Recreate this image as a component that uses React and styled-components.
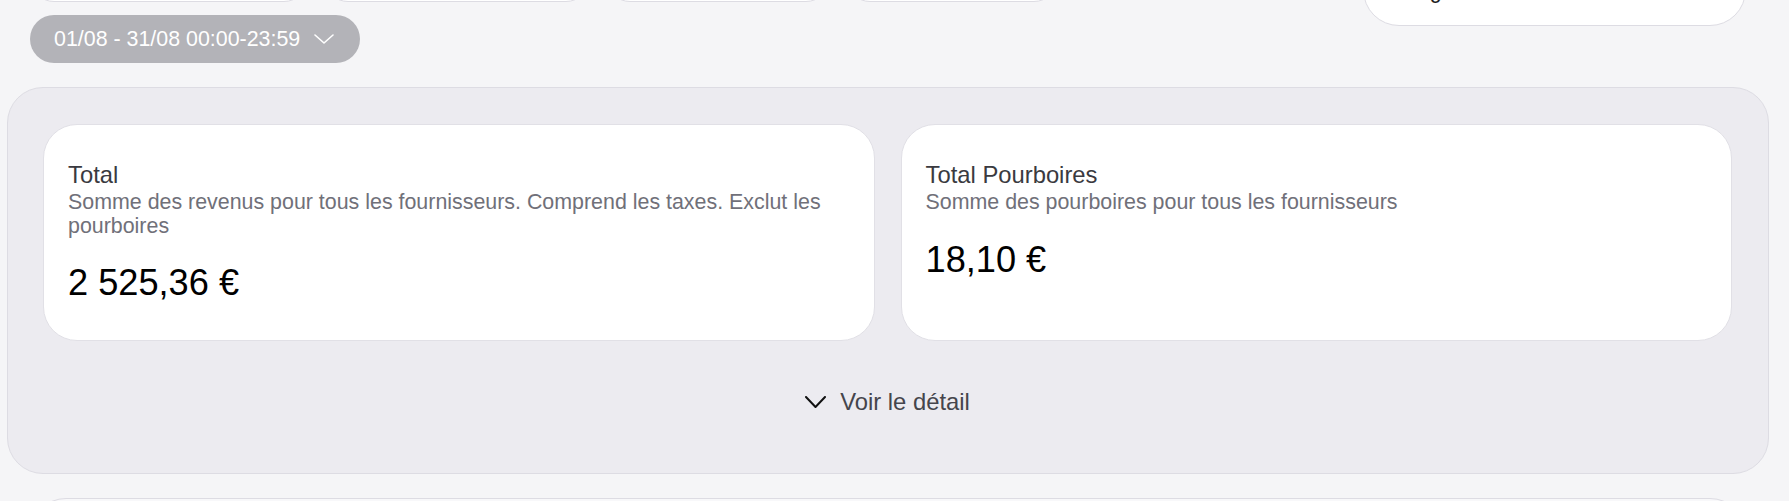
import React from "react";
import styled, { createGlobalStyle } from "styled-components";

const GlobalStyle = createGlobalStyle`
  html, body {
    margin: 0;
    padding: 0;
    background: #f5f5f7;
    overflow: hidden;
    font-family: "Liberation Sans", Arial, sans-serif;
  }
  * { box-sizing: border-box; }
`;

const Page = styled.div`
  padding: 0 43px 0 30px;
  display: flex;
  flex-direction: column;
`;

const Header = styled.div`
  display: flex;
  justify-content: space-between;
  align-items: flex-start;
`;

const LeftColumn = styled.div`
  display: flex;
  flex-direction: column;
  align-items: flex-start;
`;

const FilterRow = styled.div`
  display: flex;
  gap: 16px;
  margin-top: -46px;
`;

const FilterBox = styled.div`
  width: ${(p) => p.$w}px;
  height: 48px;
  background: #ffffff;
  border: 1px solid #dddce3;
  border-radius: 24px;
`;

const DatePill = styled.button`
  margin-top: 13px;
  height: 48px;
  display: flex;
  align-items: center;
  gap: 14px;
  padding: 0 26px 0 24px;
  border: none;
  border-radius: 24px;
  background: #b3b3b8;
  color: #ffffff;
  font-family: "Liberation Sans", Arial, sans-serif;
  font-size: 21.4px;
  cursor: pointer;
`;

const StoreBox = styled.div`
  width: 383px;
  height: 80px;
  margin-top: -54px;
  background: #ffffff;
  border: 1px solid #dddce3;
  border-radius: 36px;
  display: flex;
  align-items: center;
  padding: 0 36px;
  font-size: 21.4px;
  line-height: 25px;
  color: #1c1c22;
  overflow: hidden;
`;

const StoreLabel = styled.span`
  transform: translateY(5px);
`;

const Panel = styled.section`
  margin: 24px -23px 0 -23px;
  background: #ecebf0;
  border: 1px solid #dddce3;
  border-radius: 36px;
  padding: 36px 36px 47.5px 35px;
  display: flex;
  flex-direction: column;
  align-items: stretch;
`;

const CardGrid = styled.div`
  display: grid;
  grid-template-columns: 1fr 1fr;
  gap: 26px;
`;

const Card = styled.div`
  background: #ffffff;
  border: 1px solid #e1e0e6;
  border-radius: 34px;
  padding: 36px 24px;
  display: flex;
  flex-direction: column;
`;

const CardTitle = styled.div`
  font-size: 23.8px;
  line-height: 28px;
  color: #3a3a40;
`;

const CardDesc = styled.div`
  margin-top: 2px;
  font-size: 21.4px;
  line-height: 23.5px;
  color: #707079;
`;

const CardValue = styled.div`
  margin-top: 23px;
  font-size: 36.2px;
  line-height: 43px;
  color: #000000;
`;

const ToggleRow = styled.div`
  margin-top: 36.5px;
  display: flex;
  justify-content: center;
`;

const ToggleButton = styled.button`
  display: flex;
  align-items: center;
  gap: 14px;
  padding: 10px 0;
  background: none;
  border: none;
  font-family: "Liberation Sans", Arial, sans-serif;
  font-size: 23.8px;
  line-height: 28px;
  color: #45454c;
  cursor: pointer;
`;

const NextSection = styled.div`
  margin-top: 24px;
  height: 120px;
  background: #f8f8fa;
  border: 1px solid #dddce3;
  border-radius: 36px;
`;

const Chevron = ({ w, h, color, stroke }) => (
  <svg width={w} height={h} viewBox={`0 0 ${w} ${h}`} fill="none">
    <polyline
      points={`1,1 ${w / 2},${h - 1} ${w - 1},1`}
      stroke={color}
      strokeWidth={stroke}
      strokeLinecap="round"
      strokeLinejoin="round"
    />
  </svg>
);

const cards = [
  {
    title: "Total",
    desc: "Somme des revenus pour tous les fournisseurs. Comprend les taxes. Exclut les pourboires",
    value: "2 525,36 €",
  },
  {
    title: "Total Pourboires",
    desc: "Somme des pourboires pour tous les fournisseurs",
    value: "18,10 €",
  },
];

export default function App() {
  return (
    <>
      <GlobalStyle />
      <Page>
        <Header>
          <LeftColumn>
            <FilterRow>
              <FilterBox $w={278} />
              <FilterBox $w={266} />
              <FilterBox $w={224} />
              <FilterBox $w={212} />
            </FilterRow>
            <DatePill>
              <span>01/08 - 31/08 00:00-23:59</span>
              <Chevron w={20} h={10} color="#ffffff" stroke={1.6} />
            </DatePill>
          </LeftColumn>
          <StoreBox>
            <StoreLabel>Magasins</StoreLabel>
          </StoreBox>
        </Header>
        <Panel>
          <CardGrid>
            {cards.map((c) => (
              <Card key={c.title}>
                <CardTitle>{c.title}</CardTitle>
                <CardDesc>{c.desc}</CardDesc>
                <CardValue>{c.value}</CardValue>
              </Card>
            ))}
          </CardGrid>
          <ToggleRow>
            <ToggleButton>
              <Chevron w={21} h={12} color="#111111" stroke={2} />
              <span>Voir le détail</span>
            </ToggleButton>
          </ToggleRow>
        </Panel>
        <NextSection />
      </Page>
    </>
  );
}
